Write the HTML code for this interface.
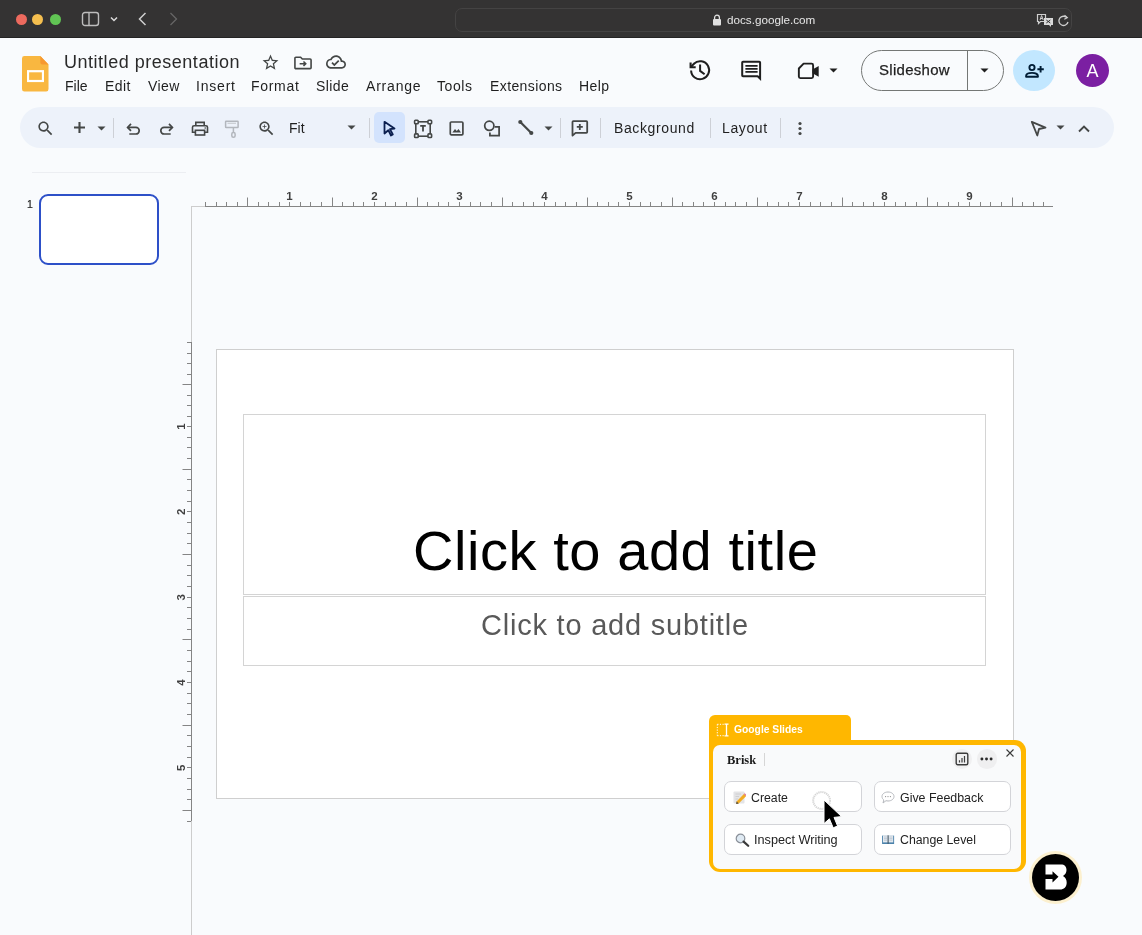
<!DOCTYPE html>
<html><head><meta charset="utf-8">
<style>
*{margin:0;padding:0;box-sizing:border-box}
html,body{width:1142px;height:935px;overflow:hidden;background:#f9fbfd;font-family:"Liberation Sans",sans-serif;position:relative}
.a{position:absolute;will-change:transform}
svg{display:block}
#titlebar{left:0;top:0;width:1142px;height:38px;background:#343333;border-bottom:1px solid #242424}
.dot{width:11px;height:11px;border-radius:50%;top:13.8px}
#addr{left:455px;top:7.5px;width:617px;height:24px;border:1px solid #444343;border-radius:7px}
.url{left:727px;top:12.6px;font-size:11.7px;color:#e6e6e6}
.menu{top:78px;font-size:14px;color:#1f1f1f;letter-spacing:0.4px}
#pill{left:20px;top:107px;width:1094px;height:41px;border-radius:21px;background:#edf2fa}
.sep{width:1px;height:20px;top:118px;background:#cdd0d6}
.tb{top:120px;font-size:14px;color:#1f1f1f;letter-spacing:0.62px}
</style></head>
<body>
<!-- browser title bar -->
<div id="titlebar" class="a"></div>
<div class="a dot" style="left:15.5px;background:#ed6a5e"></div>
<div class="a dot" style="left:32.2px;background:#f5bf4f"></div>
<div class="a dot" style="left:49.7px;background:#61c554"></div>
<div id="addr" class="a"></div>
<div class="a url">docs.google.com</div>

<!-- sidebar icon -->
<svg class="a" style="left:81px;top:11px" width="19" height="16" viewBox="0 0 19 16"><rect x="1.5" y="1.5" width="16" height="13" rx="2.5" fill="none" stroke="#bdbdbd" stroke-width="1.4"/><line x1="8" y1="2" x2="8" y2="14" stroke="#bdbdbd" stroke-width="1.4"/></svg>
<svg class="a" style="left:110px;top:16px" width="8" height="6" viewBox="0 0 8 6"><path d="M1 1.5 L4 4.5 L7 1.5" fill="none" stroke="#dcdcdc" stroke-width="1.5"/></svg>
<svg class="a" style="left:138px;top:12px" width="9" height="14" viewBox="0 0 9 14"><path d="M7.5 1 L1.5 7 L7.5 13" fill="none" stroke="#cfcfcf" stroke-width="1.5"/></svg>
<svg class="a" style="left:169px;top:12px" width="9" height="14" viewBox="0 0 9 14"><path d="M1.5 1 L7.5 7 L1.5 13" fill="none" stroke="#666" stroke-width="1.3"/></svg>
<!-- lock -->
<svg class="a" style="left:712px;top:14px" width="10" height="12" viewBox="0 0 10 12"><path d="M2.6 5 V3.6 A2.4 2.4 0 0 1 7.4 3.6 V5" fill="none" stroke="#e0e0e0" stroke-width="1.3"/><rect x="1" y="5" width="8" height="6.5" rx="1" fill="#e0e0e0"/></svg>
<!-- translate + reload -->
<svg class="a" style="left:1036px;top:13px" width="18" height="15" viewBox="0 0 18 15"><path d="M1.5 1.5 h8 v7 h-5 l-2 2 v-2 h-1 z" fill="none" stroke="#cfcfcf" stroke-width="1.2"/><path d="M4 7 l1.6-4.5 1.6 4.5 M4.6 5.5h2" fill="none" stroke="#cfcfcf" stroke-width="1"/><path d="M8 5 h9 v7 h-2 v2 l-2-2 h-5 z" fill="#d9d9d9"/><path d="M10.3 7 l4 3 M14.3 7 l-4 3" stroke="#343333" stroke-width="1"/></svg>
<svg class="a" style="left:1056.5px;top:13.5px" width="13" height="14" viewBox="0 0 13 14"><path d="M9.8 3.6 A4.6 4.6 0 1 0 11 8" fill="none" stroke="#cfcfcf" stroke-width="1.3"/><path d="M7.5 1.2 L10.3 3.7 L7.3 5.2" fill="none" stroke="#cfcfcf" stroke-width="1.2"/></svg>

<!-- Slides logo -->
<svg class="a" style="left:22px;top:56px" width="27" height="36" viewBox="0 0 28 36" preserveAspectRatio="none"><path d="M2.5 0 H19 L27.5 8.5 V33 A2.5 2.5 0 0 1 25 35.5 H2.5 A2.5 2.5 0 0 1 0 33 V2.5 A2.5 2.5 0 0 1 2.5 0 Z" fill="#f9b740"/><path d="M19 0 L27.5 8.5 H21 A2 2 0 0 1 19 6.5 Z" fill="#f7982f"/><rect x="6.3" y="15.2" width="15.4" height="9.8" fill="none" stroke="#fff" stroke-width="2.2"/></svg>
<div class="a" style="left:64px;top:51.5px;font-size:18px;color:#2a2a2a;letter-spacing:0.52px;white-space:nowrap">Untitled presentation</div>
<!-- star -->
<svg class="a" style="left:260.5px;top:53px" width="19" height="19" viewBox="0 0 24 24"><path fill="#444746" d="M22 9.24l-7.19-.62L12 2 9.19 8.63 2 9.24l5.46 4.73L5.82 21 12 17.27 18.18 21l-1.63-7.03L22 9.24zM12 15.4l-3.76 2.27 1-4.28-3.32-2.88 4.38-.38L12 6.1l1.71 4.04 4.38.38-3.32 2.88 1 4.28L12 15.4z"/></svg>
<!-- folder move -->
<svg class="a" style="left:292.5px;top:52.5px" width="20" height="19" viewBox="0 0 21 20"><path d="M3 4.5 H8 L9.8 6.3 H18 A1 1 0 0 1 19 7.3 V15.5 A1 1 0 0 1 18 16.5 H3 A1 1 0 0 1 2 15.5 V5.5 A1 1 0 0 1 3 4.5 Z" fill="none" stroke="#444746" stroke-width="1.7"/><path d="M7 11.3 H13 M11 9 L13.4 11.3 L11 13.6" fill="none" stroke="#444746" stroke-width="1.6"/></svg>
<!-- cloud done -->
<svg class="a" style="left:326px;top:52px" width="20" height="20" viewBox="0 0 24 24"><path fill="#444746" d="M19.35 10.04C18.67 6.59 15.64 4 12 4 9.11 4 6.6 5.64 5.35 8.04 2.34 8.36 0 10.910 0 14c0 3.31 2.690 6 6 6h13c2.76 0 5-2.24 5-5 0-2.64-2.05-4.78-4.65-4.96zM19 18H6c-2.21 0-4-1.79-4-4 0-2.05 1.53-3.76 3.56-3.97l1.07-.11.5-.95C8.080 7.14 9.94 6 12 6c2.62 0 4.88 1.86 5.39 4.43l.3 1.5 1.53.11c1.56.1 2.78 1.41 2.78 2.96 0 1.65-1.35 3-3 3zm-9-3.82l-2.09-2.09L6.5 13.5 10 17l6.01-6.01-1.41-1.41z"/></svg>

<div class="a menu" style="left:65px;letter-spacing:0">File</div>
<div class="a menu" style="left:105px">Edit</div>
<div class="a menu" style="left:148px">View</div>
<div class="a menu" style="left:196px;letter-spacing:0.8px">Insert</div>
<div class="a menu" style="left:251px;letter-spacing:0.7px">Format</div>
<div class="a menu" style="left:316px">Slide</div>
<div class="a menu" style="left:366px;letter-spacing:0.8px">Arrange</div>
<div class="a menu" style="left:437px;letter-spacing:0.6px">Tools</div>
<div class="a menu" style="left:489.5px">Extensions</div>
<div class="a menu" style="left:578.5px">Help</div>

<!-- right header icons -->
<svg class="a" style="left:686px;top:56px" width="28" height="28" viewBox="0 0 28 28"><path d="M5.1 14.4 A9 9 0 1 0 7.9 7.7" fill="none" stroke="#1f1f1f" stroke-width="2"/><path d="M4.6 6.4 V11.3 H9.7" fill="none" stroke="#1f1f1f" stroke-width="2.1"/><path d="M4.9 11 L8.2 7.5" stroke="#1f1f1f" stroke-width="2"/><path d="M14.1 8.6 V14.9 L18.6 18.3" fill="none" stroke="#1f1f1f" stroke-width="2"/></svg>
<svg class="a" style="left:740px;top:60px" width="24" height="22" viewBox="0 0 24 22"><path d="M3 1.7 H19.3 A0.8 0.8 0 0 1 20.1 2.5 V18.6 L17.7 16.2 H3 A0.8 0.8 0 0 1 2.2 15.4 V2.5 A0.8 0.8 0 0 1 3 1.7 Z" fill="none" stroke="#1f1f1f" stroke-width="2"/><path d="M5.4 5.8 H17.6 M5.4 8.8 H17.6 M5.4 11.8 H17.6" stroke="#1f1f1f" stroke-width="1.8"/></svg>
<svg class="a" style="left:796px;top:61px" width="24" height="19" viewBox="0 0 24 19"><path d="M7.6 2.65 H15.6 A1.5 1.5 0 0 1 17.1 4.15 V15.6 A1.5 1.5 0 0 1 15.6 17.1 H4.35 A1.5 1.5 0 0 1 2.85 15.6 V7.5 Z" fill="none" stroke="#1f1f1f" stroke-width="1.9" stroke-linejoin="round"/><path d="M16.5 8.6 L22.7 5 V15.8 L16.5 12.2 Z" fill="#1f1f1f"/></svg>
<svg class="a" style="left:827.5px;top:67px" width="11" height="7" viewBox="0 0 11 7"><path d="M1.5 1.5 L5.5 5.5 L9.5 1.5 Z" fill="#1f1f1f"/></svg>

<!-- slideshow button -->
<div class="a" style="left:861px;top:50px;width:143px;height:41px;border:1px solid #747775;border-radius:21px"></div>
<div class="a" style="left:967px;top:50px;width:1px;height:41px;background:#747775"></div>
<div class="a" style="left:879px;top:61px;font-size:15px;color:#1f1f1f;letter-spacing:0.28px;-webkit-text-stroke:0.25px #1f1f1f">Slideshow</div>
<svg class="a" style="left:979px;top:67px" width="11" height="7" viewBox="0 0 11 7"><path d="M1.5 1.5 L5.5 5.5 L9.5 1.5 Z" fill="#1f1f1f"/></svg>
<!-- share -->
<div class="a" style="left:1013px;top:49.5px;width:42px;height:41px;border-radius:50%;background:#c2e7ff"></div>
<svg class="a" style="left:1023px;top:61px" width="22" height="18" viewBox="0 0 22 18"><circle cx="9" cy="6.5" r="2.6" fill="none" stroke="#001d35" stroke-width="1.9"/><path d="M3.1 15.7 V14.9 C3.1 12.9 6 11.9 9 11.9 C12 11.9 14.9 12.9 14.9 14.9 V15.7 Z" fill="none" stroke="#001d35" stroke-width="1.9" stroke-linejoin="round"/><path d="M17.6 5.1 V11.5 M14.4 8.3 H20.8" stroke="#001d35" stroke-width="1.9"/></svg>
<!-- avatar -->
<div class="a" style="left:1076px;top:54px;width:33px;height:33px;border-radius:50%;background:#7b1fa2"></div>
<div class="a" style="left:1076px;top:61px;width:33px;text-align:center;font-size:18px;color:#fff">A</div>


<!-- toolbar -->
<div id="pill" class="a"></div>
<svg class="a" style="left:36px;top:118.5px" width="19" height="19" viewBox="0 0 24 24"><path fill="#444746" d="M15.5 14h-.79l-.28-.27C15.41 12.59 16 11.11 16 9.5 16 5.91 13.09 3 9.5 3S3 5.91 3 9.5 5.91 16 9.5 16c1.610 0 3.09-.59 4.23-1.57l.27.28v.79l5 4.99L20.49 19l-4.99-5zm-6 0C7.01 14 5 11.99 5 9.5S7.01 5 9.5 5 14 7.01 14 9.5 11.99 14 9.5 14z"/></svg>
<svg class="a" style="left:73px;top:121px" width="13" height="13" viewBox="0 0 13 13"><path d="M6.5 1 V12 M1 6.5 H12" stroke="#444746" stroke-width="2.1"/></svg>
<svg class="a" style="left:96px;top:125px" width="11" height="7" viewBox="0 0 11 7"><path d="M1.5 1.5 L5.5 5.5 L9.5 1.5 Z" fill="#444746"/></svg>
<div class="a sep" style="left:113px"></div>
<!-- undo -->
<svg class="a" style="left:125px;top:121px" width="16" height="15" viewBox="0 0 16 15"><path d="M6 2.9 L2.6 6.4 L6 9.9" fill="none" stroke="#444746" stroke-width="1.7" stroke-linejoin="miter"/><path d="M2.8 6.4 H10.9 A3.3 3.3 0 0 1 10.9 13 H4.3" fill="none" stroke="#444746" stroke-width="1.7"/></svg>
<!-- redo -->
<svg class="a" style="left:158px;top:121px" width="16" height="15" viewBox="0 0 16 15"><path d="M11 2.9 L14.4 6.4 L11 9.9" fill="none" stroke="#444746" stroke-width="1.7"/><path d="M14.2 6.4 H6.1 A3.3 3.3 0 0 0 6.1 13 H12.7" fill="none" stroke="#444746" stroke-width="1.7"/></svg>
<!-- print -->
<svg class="a" style="left:190px;top:120px" width="20" height="17" viewBox="0 0 20 17"><path d="M5.8 5.6 V2.4 H14.2 V5.6" fill="none" stroke="#444746" stroke-width="1.6"/><path d="M5.2 12.3 H2.5 V7.3 A1.6 1.6 0 0 1 4.1 5.7 H15.9 A1.6 1.6 0 0 1 17.5 7.3 V12.3 H14.8" fill="none" stroke="#444746" stroke-width="1.6"/><rect x="5.4" y="10.3" width="9.2" height="4.7" fill="none" stroke="#444746" stroke-width="1.6"/><circle cx="15.2" cy="8" r="0.8" fill="#444746"/></svg>
<!-- paint format (disabled) -->
<svg class="a" style="left:223px;top:120px" width="17" height="19" viewBox="0 0 17 19"><rect x="2.6" y="1.2" width="12.5" height="6.3" rx="0.6" fill="none" stroke="#b3b7bd" stroke-width="1.5"/><path d="M4.5 3.3 H13" stroke="#c9ccd1" stroke-width="1.2"/><path d="M10.4 7.5 V12.4" stroke="#b3b7bd" stroke-width="1.5"/><rect x="8.8" y="12.6" width="3.3" height="4.6" rx="1.5" fill="none" stroke="#b3b7bd" stroke-width="1.5"/></svg>
<!-- zoom -->
<svg class="a" style="left:256.6px;top:119px" width="19" height="19" viewBox="0 0 24 24"><path fill="#444746" d="M15.5 14h-.79l-.28-.27C15.41 12.59 16 11.11 16 9.5 16 5.91 13.09 3 9.5 3S3 5.91 3 9.5 5.91 16 9.5 16c1.61 0 3.09-.59 4.23-1.57l.27.28v.79l5 4.99L20.49 19l-4.99-5zm-6 0C7.01 14 5 11.99 5 9.5S7.01 5 9.5 5 14 7.01 14 9.5 11.99 14 9.5 14zm2.5-4h-2v2H9v-2H7V9h2V7h1v2h2v1z"/></svg>
<div class="a tb" style="left:289px;letter-spacing:0">Fit</div>
<svg class="a" style="left:346px;top:124px" width="11" height="7" viewBox="0 0 11 7"><path d="M1.5 1.5 L5.5 5.5 L9.5 1.5 Z" fill="#444746"/></svg>
<div class="a sep" style="left:369px"></div>
<!-- select active -->
<div class="a" style="left:374px;top:112px;width:31px;height:31px;border-radius:5px;background:#d3e3fd"></div>
<svg class="a" style="left:382px;top:120px" width="15" height="17" viewBox="0 0 15 17"><path d="M2.5 1.8 L12.5 8.5 L8 9.2 L10.8 14.5 L9 15.5 L6.3 10.2 L2.5 13.5 Z" fill="none" stroke="#0b1f4f" stroke-width="1.8" stroke-linejoin="round"/></svg>
<!-- text box -->
<svg class="a" style="left:412px;top:118px" width="22" height="22" viewBox="0 0 22 22"><rect x="3.8" y="3.8" width="14.4" height="14.4" fill="none" stroke="#444746" stroke-width="1.6"/><rect x="2.6" y="2.2" width="3.6" height="3.6" rx="0.8" fill="#edf2fa" stroke="#444746" stroke-width="1.6"/><rect x="16" y="2.2" width="3.6" height="3.6" rx="0.8" fill="#edf2fa" stroke="#444746" stroke-width="1.6"/><rect x="2.6" y="15.9" width="3.6" height="3.6" rx="0.8" fill="#edf2fa" stroke="#444746" stroke-width="1.6"/><rect x="16" y="15.9" width="3.6" height="3.6" rx="0.8" fill="#edf2fa" stroke="#444746" stroke-width="1.6"/><path d="M8.2 7.9 H13.8 M11 7.9 V13.6" stroke="#444746" stroke-width="1.8"/></svg>
<!-- image -->
<svg class="a" style="left:448px;top:120px" width="17" height="17" viewBox="0 0 17 17"><rect x="2.3" y="2" width="12.6" height="12.8" rx="1" fill="none" stroke="#444746" stroke-width="1.7"/><path d="M4.3 12.4 L7 9 L8.8 11 L10.5 9 L13 12.4 Z" fill="#444746"/></svg>
<!-- shapes -->
<svg class="a" style="left:482px;top:120px" width="19" height="18" viewBox="0 0 19 18"><circle cx="7.3" cy="5.8" r="4.6" fill="none" stroke="#444746" stroke-width="1.75"/><path d="M12.6 6.9 H17.1 V15.6 H7.9 V12.4" fill="none" stroke="#444746" stroke-width="1.75"/></svg>
<!-- line -->
<svg class="a" style="left:516px;top:119px" width="18" height="17" viewBox="0 0 18 17"><path d="M4.3 3 L15.3 14" stroke="#444746" stroke-width="2.2"/><circle cx="4.3" cy="3" r="2.1" fill="#444746"/><circle cx="15.3" cy="14" r="2.1" fill="#444746"/></svg>
<svg class="a" style="left:543px;top:125.3px" width="11" height="7" viewBox="0 0 11 7"><path d="M1.5 1.5 L5.5 5.5 L9.5 1.5 Z" fill="#444746"/></svg>
<div class="a sep" style="left:559.5px"></div>
<!-- comment add -->
<svg class="a" style="left:570px;top:119px" width="19" height="19" viewBox="0 0 19 19"><path d="M3.3 2.1 H16.4 A0.8 0.8 0 0 1 17.2 2.9 V13 A0.8 0.8 0 0 1 16.4 13.8 H5.6 L2.5 16.6 V2.9 A0.8 0.8 0 0 1 3.3 2.1 Z" fill="none" stroke="#444746" stroke-width="1.8" stroke-linejoin="round"/><path d="M9.8 4.9 V11 M6.8 7.95 H12.8" stroke="#444746" stroke-width="1.8"/></svg>
<div class="a sep" style="left:600px"></div>
<div class="a tb" style="left:614px">Background</div>
<div class="a sep" style="left:710px"></div>
<div class="a tb" style="left:722px">Layout</div>
<div class="a sep" style="left:780px"></div>
<svg class="a" style="left:796px;top:121px" width="8" height="15" viewBox="0 0 8 15"><circle cx="4" cy="2.5" r="1.6" fill="#444746"/><circle cx="4" cy="7.5" r="1.6" fill="#444746"/><circle cx="4" cy="12.5" r="1.6" fill="#444746"/></svg>
<!-- right toolbar -->
<svg class="a" style="left:1029px;top:119px" width="19" height="19" viewBox="0 0 19 19"><path d="M2.8 2.8 L16.5 8.6 L10 10 L8.3 16.5 Z" fill="none" stroke="#444746" stroke-width="1.8" stroke-linejoin="round"/></svg>
<svg class="a" style="left:1055px;top:124px" width="11" height="7" viewBox="0 0 11 7"><path d="M1.5 1.5 L5.5 5.5 L9.5 1.5 Z" fill="#444746"/></svg>
<svg class="a" style="left:1078px;top:124px" width="12" height="9" viewBox="0 0 12 9"><path d="M1 7.5 L6 2.5 L11 7.5" fill="none" stroke="#444746" stroke-width="1.9"/></svg>


<!-- filmstrip -->
<div class="a" style="left:32px;top:172px;width:154px;height:1px;background:#eceef2"></div>
<div class="a" style="left:27px;top:198px;font-size:10.5px;color:#1f1f1f;-webkit-text-stroke:0.2px #1f1f1f">1</div>
<div class="a" style="left:39px;top:193.5px;width:120px;height:71px;border:2px solid #2d50c8;border-radius:9px;background:#fff"></div>
<!-- rulers -->
<svg class="a" style="left:185px;top:185px" width="880" height="30" viewBox="185 185 880 30">
<line x1="191" y1="206.5" x2="205" y2="206.5" stroke="#cdcdcd" stroke-width="1"/>
<line x1="205" y1="206.5" x2="1053" y2="206.5" stroke="#858585" stroke-width="1"/>
<line x1="205.5" y1="202" x2="205.5" y2="206" stroke="#858585" stroke-width="1"/>
<line x1="216.5" y1="202" x2="216.5" y2="206" stroke="#858585" stroke-width="1"/>
<line x1="226.5" y1="202" x2="226.5" y2="206" stroke="#858585" stroke-width="1"/>
<line x1="237.5" y1="202" x2="237.5" y2="206" stroke="#858585" stroke-width="1"/>
<line x1="247.5" y1="197.5" x2="247.5" y2="206" stroke="#858585" stroke-width="1"/>
<line x1="258.5" y1="202" x2="258.5" y2="206" stroke="#858585" stroke-width="1"/>
<line x1="268.5" y1="202" x2="268.5" y2="206" stroke="#858585" stroke-width="1"/>
<line x1="279.5" y1="202" x2="279.5" y2="206" stroke="#858585" stroke-width="1"/>
<line x1="289.5" y1="202" x2="289.5" y2="206" stroke="#858585" stroke-width="1"/>
<text x="289.5" y="200" font-size="11.5" font-weight="bold" fill="#404040" text-anchor="middle" font-family="Liberation Sans">1</text>
<line x1="300.5" y1="202" x2="300.5" y2="206" stroke="#858585" stroke-width="1"/>
<line x1="310.5" y1="202" x2="310.5" y2="206" stroke="#858585" stroke-width="1"/>
<line x1="321.5" y1="202" x2="321.5" y2="206" stroke="#858585" stroke-width="1"/>
<line x1="332.5" y1="197.5" x2="332.5" y2="206" stroke="#858585" stroke-width="1"/>
<line x1="342.5" y1="202" x2="342.5" y2="206" stroke="#858585" stroke-width="1"/>
<line x1="353.5" y1="202" x2="353.5" y2="206" stroke="#858585" stroke-width="1"/>
<line x1="363.5" y1="202" x2="363.5" y2="206" stroke="#858585" stroke-width="1"/>
<line x1="374.5" y1="202" x2="374.5" y2="206" stroke="#858585" stroke-width="1"/>
<text x="374.5" y="200" font-size="11.5" font-weight="bold" fill="#404040" text-anchor="middle" font-family="Liberation Sans">2</text>
<line x1="385.5" y1="202" x2="385.5" y2="206" stroke="#858585" stroke-width="1"/>
<line x1="395.5" y1="202" x2="395.5" y2="206" stroke="#858585" stroke-width="1"/>
<line x1="406.5" y1="202" x2="406.5" y2="206" stroke="#858585" stroke-width="1"/>
<line x1="417.5" y1="197.5" x2="417.5" y2="206" stroke="#858585" stroke-width="1"/>
<line x1="427.5" y1="202" x2="427.5" y2="206" stroke="#858585" stroke-width="1"/>
<line x1="438.5" y1="202" x2="438.5" y2="206" stroke="#858585" stroke-width="1"/>
<line x1="448.5" y1="202" x2="448.5" y2="206" stroke="#858585" stroke-width="1"/>
<line x1="459.5" y1="202" x2="459.5" y2="206" stroke="#858585" stroke-width="1"/>
<text x="459.5" y="200" font-size="11.5" font-weight="bold" fill="#404040" text-anchor="middle" font-family="Liberation Sans">3</text>
<line x1="470.5" y1="202" x2="470.5" y2="206" stroke="#858585" stroke-width="1"/>
<line x1="480.5" y1="202" x2="480.5" y2="206" stroke="#858585" stroke-width="1"/>
<line x1="491.5" y1="202" x2="491.5" y2="206" stroke="#858585" stroke-width="1"/>
<line x1="502.5" y1="197.5" x2="502.5" y2="206" stroke="#858585" stroke-width="1"/>
<line x1="512.5" y1="202" x2="512.5" y2="206" stroke="#858585" stroke-width="1"/>
<line x1="523.5" y1="202" x2="523.5" y2="206" stroke="#858585" stroke-width="1"/>
<line x1="533.5" y1="202" x2="533.5" y2="206" stroke="#858585" stroke-width="1"/>
<line x1="544.5" y1="202" x2="544.5" y2="206" stroke="#858585" stroke-width="1"/>
<text x="544.5" y="200" font-size="11.5" font-weight="bold" fill="#404040" text-anchor="middle" font-family="Liberation Sans">4</text>
<line x1="555.5" y1="202" x2="555.5" y2="206" stroke="#858585" stroke-width="1"/>
<line x1="565.5" y1="202" x2="565.5" y2="206" stroke="#858585" stroke-width="1"/>
<line x1="576.5" y1="202" x2="576.5" y2="206" stroke="#858585" stroke-width="1"/>
<line x1="587.5" y1="197.5" x2="587.5" y2="206" stroke="#858585" stroke-width="1"/>
<line x1="597.5" y1="202" x2="597.5" y2="206" stroke="#858585" stroke-width="1"/>
<line x1="608.5" y1="202" x2="608.5" y2="206" stroke="#858585" stroke-width="1"/>
<line x1="618.5" y1="202" x2="618.5" y2="206" stroke="#858585" stroke-width="1"/>
<line x1="629.5" y1="202" x2="629.5" y2="206" stroke="#858585" stroke-width="1"/>
<text x="629.5" y="200" font-size="11.5" font-weight="bold" fill="#404040" text-anchor="middle" font-family="Liberation Sans">5</text>
<line x1="640.5" y1="202" x2="640.5" y2="206" stroke="#858585" stroke-width="1"/>
<line x1="650.5" y1="202" x2="650.5" y2="206" stroke="#858585" stroke-width="1"/>
<line x1="661.5" y1="202" x2="661.5" y2="206" stroke="#858585" stroke-width="1"/>
<line x1="672.5" y1="197.5" x2="672.5" y2="206" stroke="#858585" stroke-width="1"/>
<line x1="682.5" y1="202" x2="682.5" y2="206" stroke="#858585" stroke-width="1"/>
<line x1="693.5" y1="202" x2="693.5" y2="206" stroke="#858585" stroke-width="1"/>
<line x1="703.5" y1="202" x2="703.5" y2="206" stroke="#858585" stroke-width="1"/>
<line x1="714.5" y1="202" x2="714.5" y2="206" stroke="#858585" stroke-width="1"/>
<text x="714.5" y="200" font-size="11.5" font-weight="bold" fill="#404040" text-anchor="middle" font-family="Liberation Sans">6</text>
<line x1="725.5" y1="202" x2="725.5" y2="206" stroke="#858585" stroke-width="1"/>
<line x1="735.5" y1="202" x2="735.5" y2="206" stroke="#858585" stroke-width="1"/>
<line x1="746.5" y1="202" x2="746.5" y2="206" stroke="#858585" stroke-width="1"/>
<line x1="757.5" y1="197.5" x2="757.5" y2="206" stroke="#858585" stroke-width="1"/>
<line x1="767.5" y1="202" x2="767.5" y2="206" stroke="#858585" stroke-width="1"/>
<line x1="778.5" y1="202" x2="778.5" y2="206" stroke="#858585" stroke-width="1"/>
<line x1="788.5" y1="202" x2="788.5" y2="206" stroke="#858585" stroke-width="1"/>
<line x1="799.5" y1="202" x2="799.5" y2="206" stroke="#858585" stroke-width="1"/>
<text x="799.5" y="200" font-size="11.5" font-weight="bold" fill="#404040" text-anchor="middle" font-family="Liberation Sans">7</text>
<line x1="810.5" y1="202" x2="810.5" y2="206" stroke="#858585" stroke-width="1"/>
<line x1="820.5" y1="202" x2="820.5" y2="206" stroke="#858585" stroke-width="1"/>
<line x1="831.5" y1="202" x2="831.5" y2="206" stroke="#858585" stroke-width="1"/>
<line x1="842.5" y1="197.5" x2="842.5" y2="206" stroke="#858585" stroke-width="1"/>
<line x1="852.5" y1="202" x2="852.5" y2="206" stroke="#858585" stroke-width="1"/>
<line x1="863.5" y1="202" x2="863.5" y2="206" stroke="#858585" stroke-width="1"/>
<line x1="873.5" y1="202" x2="873.5" y2="206" stroke="#858585" stroke-width="1"/>
<line x1="884.5" y1="202" x2="884.5" y2="206" stroke="#858585" stroke-width="1"/>
<text x="884.5" y="200" font-size="11.5" font-weight="bold" fill="#404040" text-anchor="middle" font-family="Liberation Sans">8</text>
<line x1="895.5" y1="202" x2="895.5" y2="206" stroke="#858585" stroke-width="1"/>
<line x1="905.5" y1="202" x2="905.5" y2="206" stroke="#858585" stroke-width="1"/>
<line x1="916.5" y1="202" x2="916.5" y2="206" stroke="#858585" stroke-width="1"/>
<line x1="927.5" y1="197.5" x2="927.5" y2="206" stroke="#858585" stroke-width="1"/>
<line x1="937.5" y1="202" x2="937.5" y2="206" stroke="#858585" stroke-width="1"/>
<line x1="948.5" y1="202" x2="948.5" y2="206" stroke="#858585" stroke-width="1"/>
<line x1="958.5" y1="202" x2="958.5" y2="206" stroke="#858585" stroke-width="1"/>
<line x1="969.5" y1="202" x2="969.5" y2="206" stroke="#858585" stroke-width="1"/>
<text x="969.5" y="200" font-size="11.5" font-weight="bold" fill="#404040" text-anchor="middle" font-family="Liberation Sans">9</text>
<line x1="980.5" y1="202" x2="980.5" y2="206" stroke="#858585" stroke-width="1"/>
<line x1="990.5" y1="202" x2="990.5" y2="206" stroke="#858585" stroke-width="1"/>
<line x1="1001.5" y1="202" x2="1001.5" y2="206" stroke="#858585" stroke-width="1"/>
<line x1="1012.5" y1="197.5" x2="1012.5" y2="206" stroke="#858585" stroke-width="1"/>
<line x1="1022.5" y1="202" x2="1022.5" y2="206" stroke="#858585" stroke-width="1"/>
<line x1="1033.5" y1="202" x2="1033.5" y2="206" stroke="#858585" stroke-width="1"/>
<line x1="1043.5" y1="202" x2="1043.5" y2="206" stroke="#858585" stroke-width="1"/>
</svg>
<svg class="a" style="left:170px;top:200px" width="30" height="735" viewBox="170 200 30 735">
<line x1="191.5" y1="206" x2="191.5" y2="342" stroke="#cdcdcd" stroke-width="1"/>
<line x1="191.5" y1="342" x2="191.5" y2="821" stroke="#858585" stroke-width="1"/>
<line x1="191.5" y1="821" x2="191.5" y2="935" stroke="#cdcdcd" stroke-width="1"/>
<line x1="187" y1="342.5" x2="191" y2="342.5" stroke="#858585" stroke-width="1"/>
<line x1="187" y1="353.5" x2="191" y2="353.5" stroke="#858585" stroke-width="1"/>
<line x1="187" y1="363.5" x2="191" y2="363.5" stroke="#858585" stroke-width="1"/>
<line x1="187" y1="374.5" x2="191" y2="374.5" stroke="#858585" stroke-width="1"/>
<line x1="182.5" y1="384.5" x2="191" y2="384.5" stroke="#858585" stroke-width="1"/>
<line x1="187" y1="395.5" x2="191" y2="395.5" stroke="#858585" stroke-width="1"/>
<line x1="187" y1="405.5" x2="191" y2="405.5" stroke="#858585" stroke-width="1"/>
<line x1="187" y1="416.5" x2="191" y2="416.5" stroke="#858585" stroke-width="1"/>
<line x1="187" y1="426.5" x2="191" y2="426.5" stroke="#858585" stroke-width="1"/>
<text x="0" y="0" transform="translate(184.5 426.5) rotate(-90)" font-size="11.5" font-weight="bold" fill="#404040" text-anchor="middle" font-family="Liberation Sans">1</text>
<line x1="187" y1="437.5" x2="191" y2="437.5" stroke="#858585" stroke-width="1"/>
<line x1="187" y1="447.5" x2="191" y2="447.5" stroke="#858585" stroke-width="1"/>
<line x1="187" y1="458.5" x2="191" y2="458.5" stroke="#858585" stroke-width="1"/>
<line x1="182.5" y1="469.5" x2="191" y2="469.5" stroke="#858585" stroke-width="1"/>
<line x1="187" y1="479.5" x2="191" y2="479.5" stroke="#858585" stroke-width="1"/>
<line x1="187" y1="490.5" x2="191" y2="490.5" stroke="#858585" stroke-width="1"/>
<line x1="187" y1="501.5" x2="191" y2="501.5" stroke="#858585" stroke-width="1"/>
<line x1="187" y1="511.5" x2="191" y2="511.5" stroke="#858585" stroke-width="1"/>
<text x="0" y="0" transform="translate(184.5 511.8) rotate(-90)" font-size="11.5" font-weight="bold" fill="#404040" text-anchor="middle" font-family="Liberation Sans">2</text>
<line x1="187" y1="522.5" x2="191" y2="522.5" stroke="#858585" stroke-width="1"/>
<line x1="187" y1="533.5" x2="191" y2="533.5" stroke="#858585" stroke-width="1"/>
<line x1="187" y1="543.5" x2="191" y2="543.5" stroke="#858585" stroke-width="1"/>
<line x1="182.5" y1="554.5" x2="191" y2="554.5" stroke="#858585" stroke-width="1"/>
<line x1="187" y1="565.5" x2="191" y2="565.5" stroke="#858585" stroke-width="1"/>
<line x1="187" y1="575.5" x2="191" y2="575.5" stroke="#858585" stroke-width="1"/>
<line x1="187" y1="586.5" x2="191" y2="586.5" stroke="#858585" stroke-width="1"/>
<line x1="187" y1="597.5" x2="191" y2="597.5" stroke="#858585" stroke-width="1"/>
<text x="0" y="0" transform="translate(184.5 597.2) rotate(-90)" font-size="11.5" font-weight="bold" fill="#404040" text-anchor="middle" font-family="Liberation Sans">3</text>
<line x1="187" y1="607.5" x2="191" y2="607.5" stroke="#858585" stroke-width="1"/>
<line x1="187" y1="618.5" x2="191" y2="618.5" stroke="#858585" stroke-width="1"/>
<line x1="187" y1="629.5" x2="191" y2="629.5" stroke="#858585" stroke-width="1"/>
<line x1="182.5" y1="639.5" x2="191" y2="639.5" stroke="#858585" stroke-width="1"/>
<line x1="187" y1="650.5" x2="191" y2="650.5" stroke="#858585" stroke-width="1"/>
<line x1="187" y1="661.5" x2="191" y2="661.5" stroke="#858585" stroke-width="1"/>
<line x1="187" y1="671.5" x2="191" y2="671.5" stroke="#858585" stroke-width="1"/>
<line x1="187" y1="682.5" x2="191" y2="682.5" stroke="#858585" stroke-width="1"/>
<text x="0" y="0" transform="translate(184.5 682.5) rotate(-90)" font-size="11.5" font-weight="bold" fill="#404040" text-anchor="middle" font-family="Liberation Sans">4</text>
<line x1="187" y1="693.5" x2="191" y2="693.5" stroke="#858585" stroke-width="1"/>
<line x1="187" y1="703.5" x2="191" y2="703.5" stroke="#858585" stroke-width="1"/>
<line x1="187" y1="714.5" x2="191" y2="714.5" stroke="#858585" stroke-width="1"/>
<line x1="182.5" y1="725.5" x2="191" y2="725.5" stroke="#858585" stroke-width="1"/>
<line x1="187" y1="735.5" x2="191" y2="735.5" stroke="#858585" stroke-width="1"/>
<line x1="187" y1="746.5" x2="191" y2="746.5" stroke="#858585" stroke-width="1"/>
<line x1="187" y1="757.5" x2="191" y2="757.5" stroke="#858585" stroke-width="1"/>
<line x1="187" y1="767.5" x2="191" y2="767.5" stroke="#858585" stroke-width="1"/>
<text x="0" y="0" transform="translate(184.5 767.8) rotate(-90)" font-size="11.5" font-weight="bold" fill="#404040" text-anchor="middle" font-family="Liberation Sans">5</text>
<line x1="187" y1="778.5" x2="191" y2="778.5" stroke="#858585" stroke-width="1"/>
<line x1="187" y1="789.5" x2="191" y2="789.5" stroke="#858585" stroke-width="1"/>
<line x1="187" y1="799.5" x2="191" y2="799.5" stroke="#858585" stroke-width="1"/>
<line x1="182.5" y1="810.5" x2="191" y2="810.5" stroke="#858585" stroke-width="1"/>
<line x1="187" y1="821.5" x2="191" y2="821.5" stroke="#858585" stroke-width="1"/>
</svg>
<!-- slide -->
<div class="a" style="left:216px;top:349px;width:798px;height:450px;background:#fff;border:1px solid #cfcfcf"></div>
<div class="a" style="left:243px;top:414px;width:743px;height:181px;border:1px solid #d4d4d4"></div>
<div class="a" style="left:243px;top:596px;width:743px;height:70px;border:1px solid #d4d4d4"></div>
<div class="a" style="left:412.5px;top:518px;font-size:56px;letter-spacing:0.56px;color:#000;white-space:nowrap">Click to add title</div>
<div class="a" style="left:480.5px;top:608.5px;font-size:29px;letter-spacing:0.78px;color:#595959;white-space:nowrap">Click to add subtitle</div>


<!-- Brisk panel -->
<div class="a" style="left:709px;top:715px;width:142px;height:32px;background:#ffb700;border-radius:6px 5px 0 0"></div>
<div class="a" style="left:709px;top:740px;width:317px;height:132px;background:#ffb700;border-radius:0 11px 11px 11px"></div>
<div class="a" style="left:713px;top:744.5px;width:308px;height:123.5px;background:#f9fafb;border-radius:7px"></div>
<svg class="a" style="left:716px;top:723px" width="14" height="14" viewBox="0 0 14 14"><path d="M1.3 1.3 H8.5 M1.3 12.7 H8.5 M1.3 1.3 V12.7" fill="none" stroke="#fff" stroke-width="1" stroke-dasharray="1.2 1.4"/><path d="M8.5 1.2 H12.5 M10.5 1.2 V12.8 M8.5 12.8 H12.5" fill="none" stroke="#fff" stroke-width="1.3"/></svg>
<div class="a" style="left:734px;top:724px;font-size:10.3px;font-weight:bold;color:#fff;white-space:nowrap">Google Slides</div>
<div class="a" style="left:726.5px;top:753px;font-family:'Liberation Serif',serif;font-size:12.5px;font-weight:bold;color:#1a1a1a">Brisk</div>
<div class="a" style="left:764px;top:753px;width:1px;height:13px;background:#d6d6d6"></div>
<div class="a" style="left:952px;top:749px;width:20px;height:20px;border-radius:50%;background:#f0f0f1"></div>
<svg class="a" style="left:955px;top:752px" width="14" height="14" viewBox="0 0 14 14"><rect x="1.2" y="1.2" width="11.6" height="11.6" rx="1.5" fill="none" stroke="#3c3c3c" stroke-width="1.4"/><path d="M4.5 10.5 V8.3 M7 10.5 V6 M9.5 10.5 V4" stroke="#3c3c3c" stroke-width="1.2"/></svg>
<div class="a" style="left:976.5px;top:749px;width:19.5px;height:19.5px;border-radius:50%;background:#efeff0"></div>
<svg class="a" style="left:979px;top:756px" width="15" height="6" viewBox="0 0 15 6"><circle cx="2.9" cy="3" r="1.45" fill="#2a2a2a"/><circle cx="7.5" cy="3" r="1.45" fill="#2a2a2a"/><circle cx="12.1" cy="3" r="1.45" fill="#2a2a2a"/></svg>
<svg class="a" style="left:1005px;top:748px" width="10" height="10" viewBox="0 0 10 10"><path d="M1.5 1.5 L8.5 8.5 M8.5 1.5 L1.5 8.5" stroke="#3a3a3a" stroke-width="1.1"/></svg>
<!-- buttons -->
<div class="a" style="left:724px;top:781px;width:138px;height:31px;border:1px solid #d3d4d8;border-radius:7px;background:#fff"></div>
<div class="a" style="left:874px;top:781px;width:137px;height:31px;border:1px solid #d3d4d8;border-radius:7px;background:#fff"></div>
<div class="a" style="left:724px;top:824px;width:138px;height:31px;border:1px solid #d3d4d8;border-radius:7px;background:#fff"></div>
<div class="a" style="left:874px;top:824px;width:137px;height:31px;border:1px solid #d3d4d8;border-radius:7px;background:#fff"></div>
<!-- memo icon -->
<svg class="a" style="left:733px;top:791px" width="13" height="13" viewBox="0 0 13 13"><rect x="0.5" y="0.5" width="11" height="12" rx="1" fill="#e4e4e6"/><path d="M2.5 3 H8 M2.5 5.5 H6 M2.5 8 H5" stroke="#c9c9cc" stroke-width="0.8"/><path d="M3.6 10.4 L10.9 3.1 L13 5.2 L5.7 12.5 L3.2 12.9 Z" fill="#f1ac22"/><path d="M10.9 3.1 L11.8 2.2 L13.9 4.3 L13 5.2 Z" fill="#e0607a"/><path d="M3.6 10.4 L3.2 12.9 L5.7 12.5 Z" fill="#444"/></svg>
<div class="a" style="left:751px;top:790.8px;font-size:12.3px;color:#222;white-space:nowrap">Create</div>
<!-- speech icon -->
<svg class="a" style="left:881px;top:791px" width="14" height="13" viewBox="0 0 14 13"><path d="M7 1 C10.5 1 13 3 13 5.5 C13 8 10.5 10 7 10 C6.3 10 5.6 9.9 5 9.7 L2 12 L2.8 9 C1.6 8.1 1 6.9 1 5.5 C1 3 3.5 1 7 1 Z" fill="#fff" stroke="#b5b8bd" stroke-width="1"/><circle cx="4.6" cy="5.6" r="0.6" fill="#888"/><circle cx="7" cy="5.6" r="0.6" fill="#888"/><circle cx="9.4" cy="5.6" r="0.6" fill="#888"/></svg>
<div class="a" style="left:900px;top:790.8px;font-size:12.4px;color:#222;white-space:nowrap">Give Feedback</div>
<!-- magnifier icon -->
<svg class="a" style="left:735px;top:833px" width="15" height="14" viewBox="0 0 15 14"><circle cx="5.5" cy="5.5" r="4.3" fill="#dfeaf3" stroke="#8a9099" stroke-width="1.2"/><path d="M8.6 8.6 L13.2 12.8" stroke="#3a3a3a" stroke-width="2.2" stroke-linecap="round"/></svg>
<div class="a" style="left:754px;top:833px;font-size:12.7px;color:#222;white-space:nowrap">Inspect Writing</div>
<!-- book icon -->
<svg class="a" style="left:881px;top:834px" width="14" height="12" viewBox="0 0 14 12"><rect x="1.1" y="1.6" width="12" height="8.4" fill="#4b82ab"/><rect x="2" y="1.2" width="4.8" height="7.2" fill="#e3e9ef"/><rect x="7.4" y="1.2" width="4.8" height="7.2" fill="#e3e9ef"/><path d="M3 3 H6 M3 4.6 H6 M3 6.2 H6 M8.4 3 H11.4 M8.4 4.6 H11.4 M8.4 6.2 H11.4" stroke="#aab6c2" stroke-width="0.6"/><path d="M7.1 1.2 V9.8" stroke="#3a3a3a" stroke-width="0.7"/></svg>
<div class="a" style="left:900px;top:833px;font-size:12.3px;color:#222;white-space:nowrap">Change Level</div>
<!-- spinner -->
<svg class="a" style="left:811px;top:790px" width="22" height="22" viewBox="0 0 22 22"><circle cx="10.6" cy="10.5" r="8.4" fill="none" stroke="#d6d6d6" stroke-width="2" stroke-dasharray="1.3 0.7"/></svg>
<!-- cursor -->
<svg class="a" style="left:820px;top:796px" width="28" height="36" viewBox="0 0 28 36"><path d="M4 4 L4 27.6 L9.4 22.8 L13.2 31.8 L17.6 30 L14 21.4 L21.6 20.6 Z" fill="#000" stroke="#fff" stroke-width="1" stroke-linejoin="round"/></svg>
<!-- Brisk B button -->
<div class="a" style="left:1029px;top:850.5px;width:53px;height:53px;border-radius:50%;background:#fcf0cf"></div>
<div class="a" style="left:1032px;top:853.5px;width:47px;height:47px;border-radius:50%;background:#000"></div>
<svg class="a" style="left:1044px;top:863px" width="24" height="28" viewBox="0 0 24 28"><path d="M1.5 1.5 H17 C20.5 1.5 22.5 3.5 22.5 7 C22.5 9.5 21.3 11.5 19 13 C21.5 14.5 22.7 16.5 22.7 19.5 C22.7 24 20 26.5 16 26.5 H1.5 V16 H8.5 V19.5 L14.5 13.8 L8.5 8.2 V11.5 H1.5 Z" fill="#fff"/></svg>

</body></html>
